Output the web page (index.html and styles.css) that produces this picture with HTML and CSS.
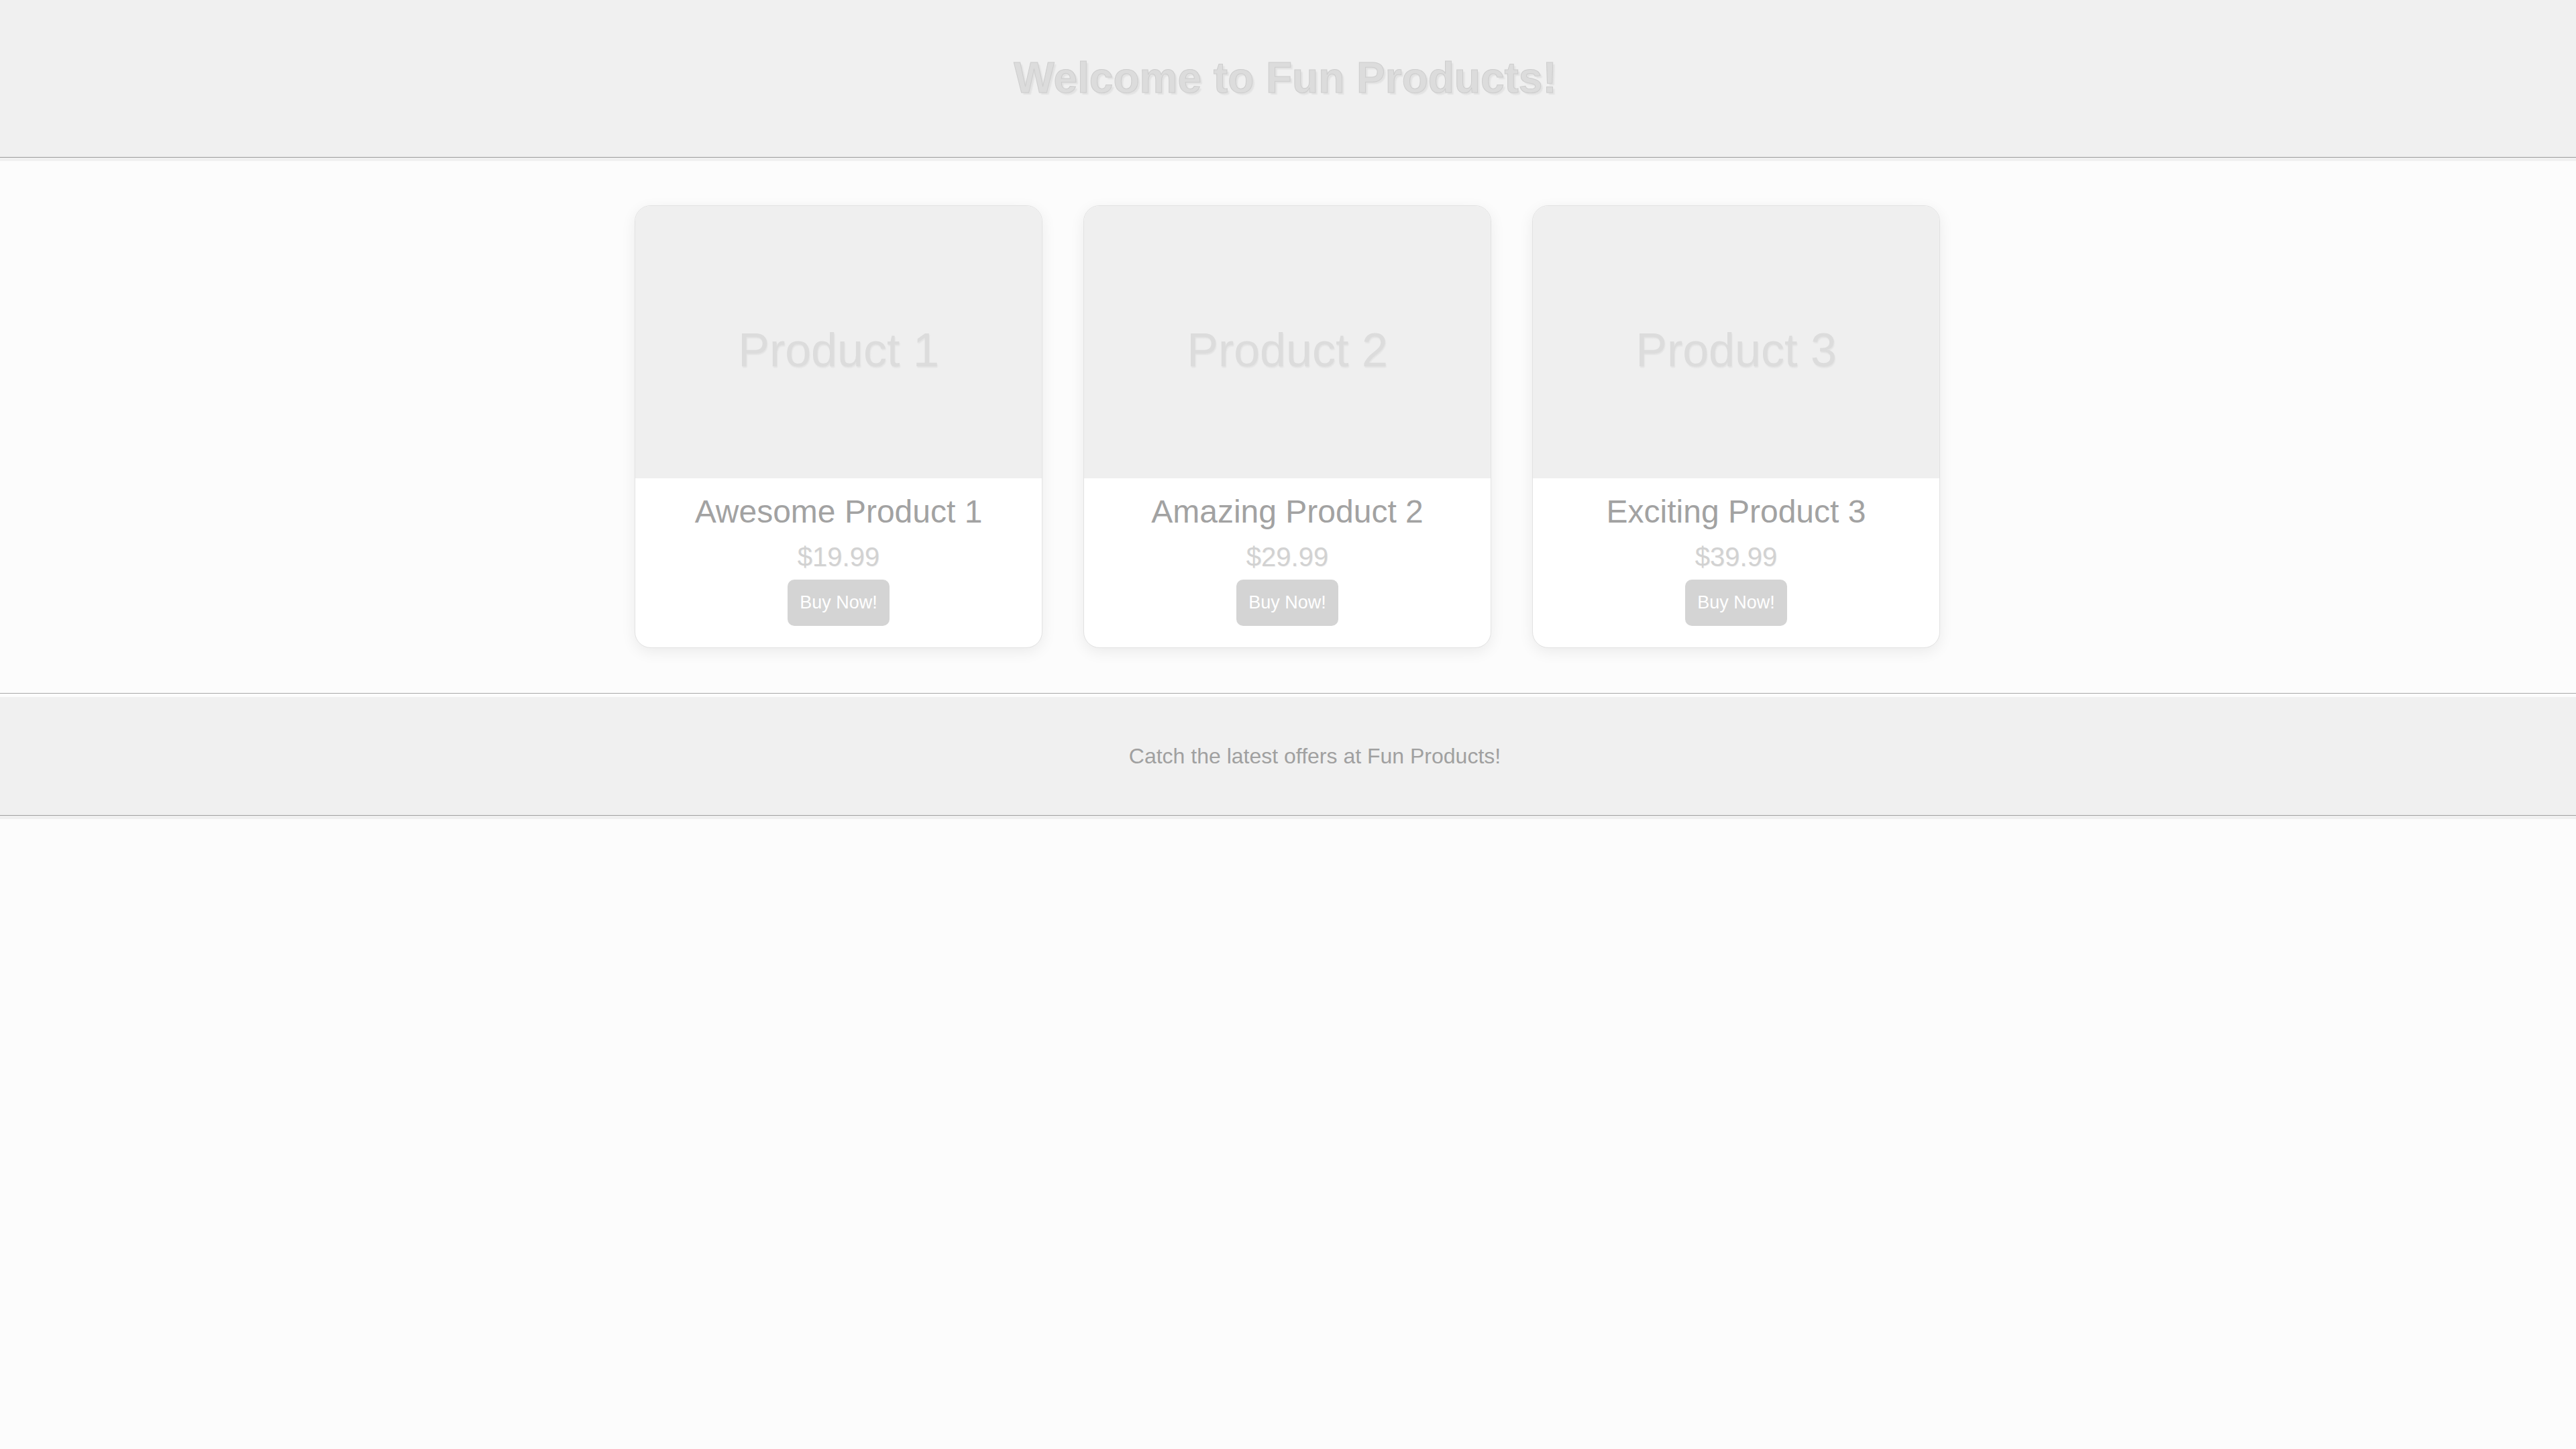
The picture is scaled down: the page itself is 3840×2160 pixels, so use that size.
FILE: index.html
```html
<!DOCTYPE html>
<html lang="en">
<head>
<meta charset="utf-8">
<title>Fun Products</title>
<link rel="stylesheet" href="styles.css">
</head>
<body>
<header class="site-header">
  <div class="header-inner">
    <h1 class="site-title">Welcome to Fun Products!</h1>
  </div>
</header>
<main class="products">
  <div class="product-card">
    <div class="product-image">Product 1</div>
    <div class="product-body">
      <h2 class="product-name">Awesome Product 1</h2>
      <p class="product-price">$19.99</p>
      <button class="buy-button">Buy Now!</button>
    </div>
  </div>
  <div class="product-card">
    <div class="product-image">Product 2</div>
    <div class="product-body">
      <h2 class="product-name">Amazing Product 2</h2>
      <p class="product-price">$29.99</p>
      <button class="buy-button">Buy Now!</button>
    </div>
  </div>
  <div class="product-card">
    <div class="product-image">Product 3</div>
    <div class="product-body">
      <h2 class="product-name">Exciting Product 3</h2>
      <p class="product-price">$39.99</p>
      <button class="buy-button">Buy Now!</button>
    </div>
  </div>
</main>
<footer class="site-footer">
  <div class="footer-inner">
    <p class="footer-text">Catch the latest offers at Fun Products!</p>
  </div>
</footer>
</body>
</html>
```
FILE: styles.css
```css
html, body {
  margin: 0;
  padding: 0;
}
body {
  background: #fcfcfc;
  font-family: "Liberation Sans", Arial, sans-serif;
}
.site-header {
  background: #f0f0f0;
  border-bottom: 5px solid #f0f0f0;
}
.header-inner {
  height: 234px;
  border-bottom: 1px solid #9c9c9c;
  display: flex;
  align-items: center;
  justify-content: center;
}
.site-title {
  margin: 0 8px 0 0;
  font-size: 64px;
  font-weight: bold;
  color: #dcdcdc;
  -webkit-text-stroke: 1px #cdcdcd;
  text-shadow: 3px 3px 2px rgba(0, 0, 0, 0.06);
  line-height: 1.15;
}
.products {
  display: flex;
  justify-content: center;
  gap: 61px;
  padding: 66px 0 67px;
  margin-left: -2px;
  border-bottom: 1px solid #a8a8a8;
  margin-bottom: 5px;
}
.product-card {
  width: 608px;
  box-sizing: border-box;
  background: #ffffff;
  border: 1px solid #e2e2e2;
  border-radius: 24px;
  overflow: hidden;
  box-shadow: 0 6px 22px rgba(0, 0, 0, 0.07);
}
.product-image {
  height: 406px;
  box-sizing: border-box;
  padding-top: 24px;
  background: #efefef;
  display: flex;
  align-items: center;
  justify-content: center;
  font-size: 70px;
  color: #dcdcdc;
  text-shadow: 1px 2px 2px rgba(0, 0, 0, 0.05);
}
.product-body {
  display: flex;
  flex-direction: column;
  align-items: center;
  padding: 22px 20px 32px;
}
.product-name {
  margin: 0;
  font-size: 48px;
  font-weight: normal;
  line-height: 56px;
  color: #a2a2a2;
}
.product-price {
  margin: 16px 0 11px;
  font-size: 40px;
  line-height: 46px;
  color: #d2d2d2;
  text-shadow: 1px 1px 1px rgba(0, 0, 0, 0.05);
}
.buy-button {
  font-family: "Liberation Sans", Arial, sans-serif;
  font-size: 27px;
  line-height: 31px;
  padding: 19px 18px;
  border: none;
  border-radius: 10px;
  background: #d4d4d4;
  color: #ffffff;
}
.site-footer {
  background: #f0f0f0;
  border-bottom: 5px solid #f0f0f0;
}
.footer-inner {
  height: 176px;
  border-bottom: 1px solid #a0a0a0;
  display: flex;
  align-items: center;
  justify-content: center;
  padding-left: 80px;
}
.footer-text {
  margin: 0;
  font-size: 32px;
  color: #a0a0a0;
}
```
